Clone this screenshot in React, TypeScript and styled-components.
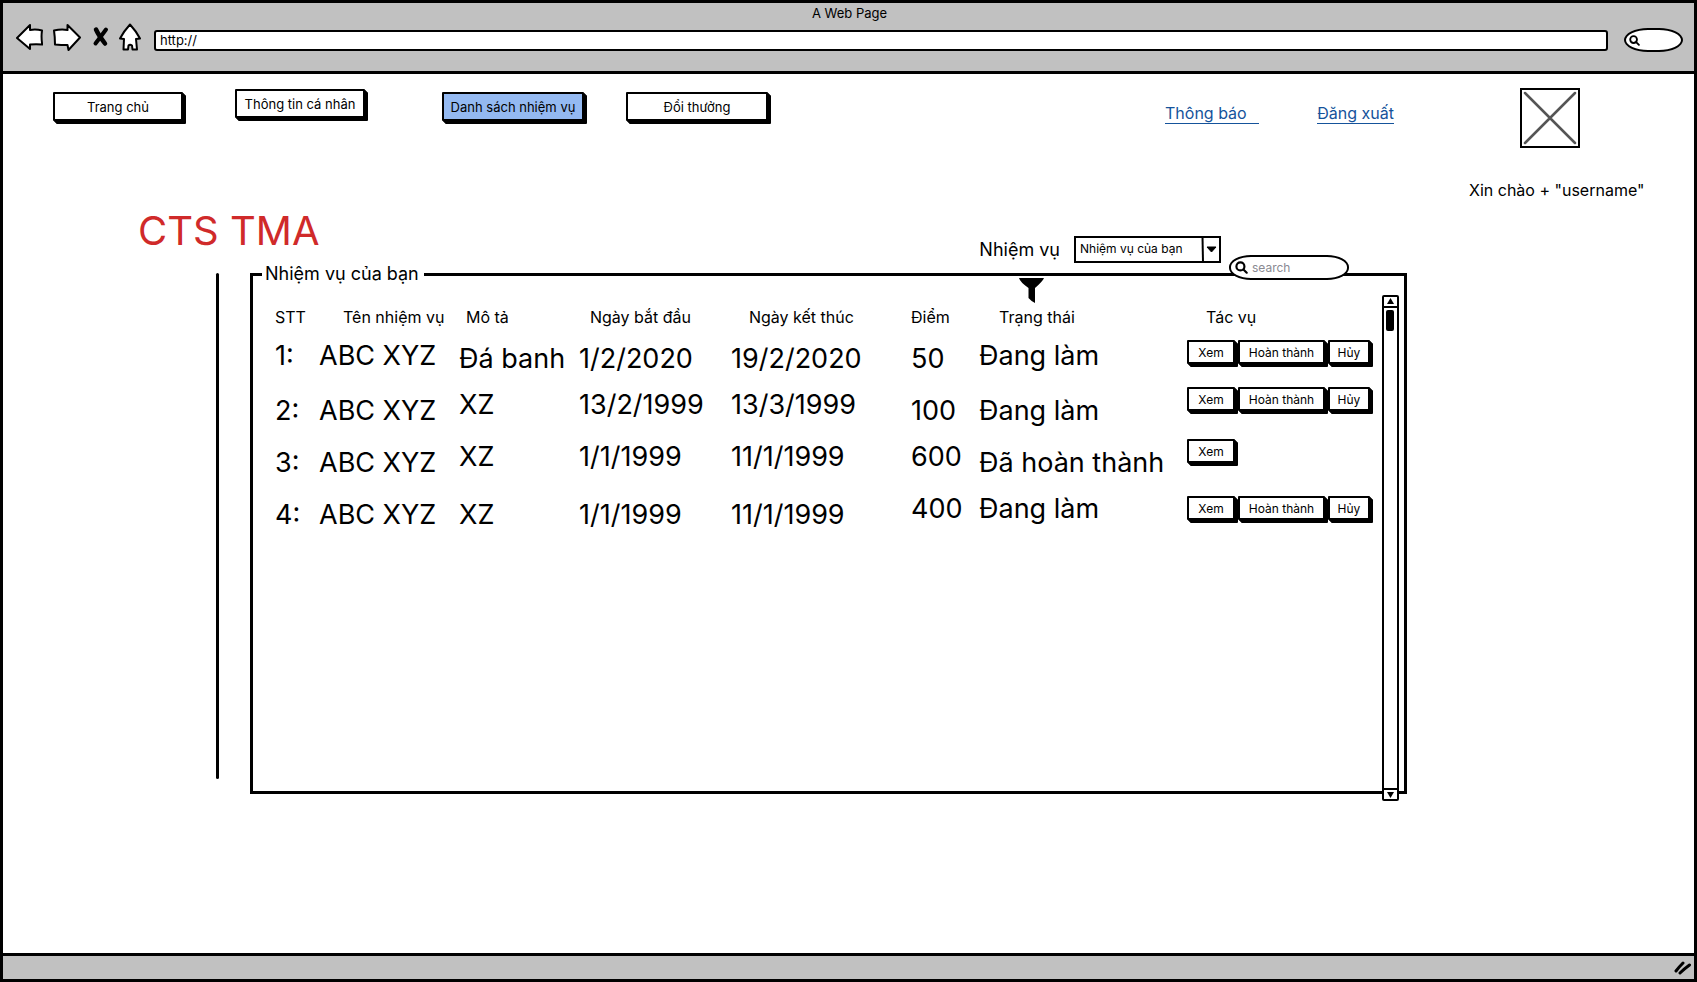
import React from 'react';
import styled, { createGlobalStyle } from 'styled-components';

const ink = '#000';
const chrome = '#c1c1c1';

const GlobalStyle = createGlobalStyle`
  *, *::before, *::after { box-sizing: border-box; }
  body { margin: 0; background: #fff; }
  body, button, input, select { font-family: Inter, "Noto Sans", sans-serif; color: ${ink}; }
`;

const Window = styled.div`
  display: flex;
  flex-direction: column;
  min-height: 100vh;
  border: 3px solid ${ink};
  background: #fff;
`;

const TopBar = styled.header`
  background: ${chrome};
  border-bottom: 3px solid ${ink};
  padding: 1px 11px 19px 13px;
`;

const WindowTitle = styled.div`
  text-align: center;
  font-size: 13px;
  line-height: 18px;
`;

const Toolbar = styled.div`
  display: flex;
  align-items: center;
  gap: 10px;
  height: 30px;
`;

const IconButton = styled.button`
  display: flex;
  border: 0;
  padding: 0;
  background: none;
`;

const AddressInput = styled.input`
  flex: 1;
  min-width: 0;
  height: 21px;
  margin: 6px 6px 0 3px;
  padding: 0 4px;
  border: 2px solid ${ink};
  border-radius: 3px;
  background: #fff;
  font-size: 13px;
`;

const BrowserSearch = styled.label`
  display: flex;
  align-items: center;
  width: 59px;
  height: 24px;
  margin-top: 6px;
  padding-left: 3px;
  border: 2px solid ${ink};
  border-radius: 24px / 12px;
  background: #fff;
`;

const BareInput = styled.input`
  flex: 1;
  min-width: 0;
  border: 0;
  padding: 0;
  background: none;
  outline: none;
  font-size: 12px;
  &::placeholder { color: #8a8a92; opacity: 1; }
`;

const Page = styled.div`
  flex: 1;
  display: flex;
  flex-direction: column;
`;

const SiteHeader = styled.div`
  display: flex;
  align-items: flex-start;
  padding: 14px 48px 0 50px;
`;

const Nav = styled.nav`
  display: grid;
  grid-template-columns: 182px 207px 184px auto;
  align-items: end;
  height: 32px;
  margin-top: 1px;
`;

const Button = styled.button<{ $width: number; $height?: number; $active?: boolean; $raised?: boolean }>`
  width: ${(p) => p.$width}px;
  height: ${(p) => p.$height ?? 29}px;
  align-self: ${(p) => (p.$raised ? 'start' : 'auto')};
  padding: 0;
  border: 2px solid ${ink};
  border-radius: 1px;
  box-shadow: 1px 1px 0 ${ink}, 2px 2px 0 ${ink}, 3px 3px 0 ${ink};
  background: ${(p) => (p.$active ? '#94b9f1' : '#fff')};
  font-size: ${(p) => (p.$height ? 12 : 13)}px;
  white-space: nowrap;
`;

const Links = styled.div`
  display: flex;
  justify-content: space-between;
  width: 229px;
  margin: 16px 75px 0 auto;
`;

const TextLink = styled.a<{ $trail?: boolean }>`
  padding-right: ${(p) => (p.$trail ? 12 : 0)}px;
  border-bottom: 1px solid #15539b;
  color: #15539b;
  font-size: 16px;
  line-height: 19px;
  text-decoration: none;
`;

const User = styled.div`
  width: 177px;
  font-size: 16px;
  line-height: 20px;
  white-space: nowrap;
`;

const Avatar = styled.svg`
  display: block;
  margin: 0 0 32px 51px;
`;

const TitleRow = styled.div`
  display: flex;
  justify-content: space-between;
  height: 54px;
  margin-top: 9px;
  padding: 0 473px 0 135px;
`;

const Title = styled.h1`
  margin: 0;
  color: #d02a2a;
  font-size: 40px;
  font-weight: 400;
  line-height: 43px;
`;

const Filter = styled.label`
  display: flex;
  align-items: center;
  align-self: flex-end;
  gap: 14px;
  font-size: 18px;
  line-height: 27px;
`;

const SelectBox = styled.span`
  position: relative;
  display: flex;
  width: 147px;
  height: 27px;
`;

const Select = styled.select`
  width: 100%;
  appearance: none;
  padding: 0 24px 2px 4px;
  border: 2px solid ${ink};
  border-radius: 0;
  background: #fff;
  font-size: 12px;
`;

const SelectArrow = styled.svg`
  position: absolute;
  top: 0;
  right: 0;
  pointer-events: none;
`;

const Main = styled.main`
  flex: 1;
  display: flex;
  padding: 0 287px 159px 213px;
`;

const Rule = styled.div`
  width: 3px;
  margin: 10px 31px 15px 0;
  border-radius: 2px;
  background: ${ink};
`;

const Panel = styled.div`
  position: relative;
  flex: 1;
  min-width: 0;
  display: flex;
`;

const Group = styled.fieldset`
  flex: 1;
  min-width: 0;
  margin: 0;
  padding: 19px 30px 0 22px;
  border: 3px solid ${ink};
`;

const Legend = styled.legend`
  margin-left: -13px;
  padding: 0 5px 0 3px;
  font-size: 18px;
  line-height: 22px;
`;

const SearchBox = styled.label`
  position: absolute;
  top: -8px;
  right: 58px;
  display: flex;
  align-items: center;
  gap: 4px;
  width: 120px;
  height: 25px;
  padding: 0 16px 0 4px;
  border: 2px solid ${ink};
  border-radius: 22px / 12px;
  background: #fff;
`;

const Table = styled.table`
  width: 100%;
  table-layout: fixed;
  border-collapse: collapse;
`;

const Heading = styled.th<{ $width?: number; $indent: number }>`
  width: ${(p) => (p.$width ? `${p.$width}px` : 'auto')};
  padding: 0 0 0 ${(p) => p.$indent}px;
  font-size: 16px;
  font-weight: 400;
  line-height: 26px;
  text-align: left;
  white-space: nowrap;
`;

const Filterable = styled.span`
  position: relative;
`;

const Funnel = styled.svg`
  position: absolute;
  bottom: 24px;
  left: 20px;
`;

type Align = 'top' | 'middle' | 'bottom';

const Row = styled.tr`
  height: 52px;
`;

const Cell = styled.td<{ $align: Align }>`
  padding: 0;
  vertical-align: ${(p) => p.$align};
  font-size: 27px;
  line-height: 46px;
  white-space: nowrap;
`;

const Actions = styled.div<{ $tight?: boolean }>`
  display: flex;
  align-items: center;
  gap: 3px;
  height: ${(p) => (p.$tight ? 34 : 44)}px;
`;

const Scrollbar = styled.div`
  position: absolute;
  top: 32px;
  bottom: -7px;
  right: 8px;
  width: 17px;
  display: flex;
  flex-direction: column;
  border: 2px solid ${ink};
  border-radius: 2px;
  background: #fff;
`;

const Track = styled.div`
  flex: 1;
  padding: 2px;
  border: solid ${ink};
  border-width: 2px 0;
`;

const Thumb = styled.div`
  width: 8px;
  height: 21px;
  border-radius: 2px;
  background: ${ink};
`;

const StatusBar = styled.footer`
  display: flex;
  justify-content: flex-end;
  align-items: center;
  height: 26px;
  padding-right: 2px;
  border-top: 3px solid ${ink};
  background: ${chrome};
`;

const Magnifier = ({ size }: { size: number }) => (
  <svg width={size} height={size} viewBox="0 0 12 12" fill="none" stroke={ink} strokeWidth="2" strokeLinecap="round" aria-hidden="true">
    <circle cx="5" cy="5" r="3.7" />
    <path d="M7.8 7.8 L10.8 10.8" />
  </svg>
);

const outline = { fill: '#fff', stroke: ink, strokeWidth: 2, strokeLinejoin: 'round' as const };

const columns = [
  { label: 'STT', width: 44, indent: 0 },
  { label: 'Tên nhiệm vụ', width: 140, indent: 24 },
  { label: 'Mô tả', width: 120, indent: 7 },
  { label: 'Ngày bắt đầu', width: 152, indent: 11 },
  { label: 'Ngày kết thúc', width: 180, indent: 18 },
  { label: 'Điểm', width: 68, indent: 0 },
  { label: 'Trạng thái', width: 208, indent: 20 },
  { label: 'Tác vụ', indent: 19 },
];

interface Task {
  cells: [string, Align][];
  tight?: boolean;
  done?: boolean;
}

const tasks: Task[] = [
  {
    cells: [['1:', 'middle'], ['ABC XYZ', 'middle'], ['Đá banh', 'bottom'], ['1/2/2020', 'bottom'], ['19/2/2020', 'bottom'], ['50', 'bottom'], ['Đang làm', 'middle']],
  },
  {
    cells: [['2:', 'bottom'], ['ABC XYZ', 'bottom'], ['XZ', 'top'], ['13/2/1999', 'top'], ['13/3/1999', 'top'], ['100', 'bottom'], ['Đang làm', 'bottom']],
    tight: true,
  },
  {
    cells: [['3:', 'bottom'], ['ABC XYZ', 'bottom'], ['XZ', 'top'], ['1/1/1999', 'top'], ['11/1/1999', 'top'], ['600', 'top'], ['Đã hoàn thành', 'bottom']],
    tight: true,
    done: true,
  },
  {
    cells: [['4:', 'bottom'], ['ABC XYZ', 'bottom'], ['XZ', 'bottom'], ['1/1/1999', 'bottom'], ['11/1/1999', 'bottom'], ['400', 'top'], ['Đang làm', 'top']],
  },
];

export default function App() {
  return (
    <Window>
      <GlobalStyle />
      <TopBar>
        <WindowTitle>A Web Page</WindowTitle>
        <Toolbar>
          <IconButton aria-label="Back">
            <svg width="27" height="28" viewBox="0 0 27 28">
              <path d="M1 15 L14 2 L14 7 Q20 6 26 7.5 Q25 14 26.200 21.500 Q20 21 14 21.500 L14 26 Z" {...outline} />
            </svg>
          </IconButton>
          <IconButton aria-label="Forward">
            <svg width="28" height="28" viewBox="0 0 28 28">
              <path d="M1 7.500 Q8 6 14.500 7 L14.500 2 L27 14.500 L15.500 27 L14.500 22 Q8 22 2 21.500 Q2 14 1 7.500 Z" {...outline} />
            </svg>
          </IconButton>
          <IconButton aria-label="Stop">
            <svg width="18" height="28" viewBox="0 0 18 28" fill="none" stroke={ink} strokeLinecap="round">
              <path d="M5 6.500 Q7.500 12 14 20.500" strokeWidth="4.500" />
              <path d="M15 6.500 Q11 12 4.500 20.500" strokeWidth="4" />
            </svg>
          </IconButton>
          <IconButton aria-label="Home">
            <svg width="22" height="28" viewBox="0 0 22 28">
              <path d="M11 1.500 Q17 8 21 15.500 L17 16 L18 26.500 L13.500 26.500 L13 22.500 Q11 21 9.500 22.500 L9 26.500 L4.500 26.500 L5 16 L1 15.500 Q5 8 11 1.500 Z" {...outline} />
            </svg>
          </IconButton>
          <AddressInput aria-label="Address" defaultValue="http://" />
          <BrowserSearch>
            <Magnifier size={11} />
            <BareInput aria-label="Search the web" />
          </BrowserSearch>
        </Toolbar>
      </TopBar>

      <Page>
        <SiteHeader>
          <Nav>
            <Button $width={130}>Trang chủ</Button>
            <Button $width={130} $raised>Thông tin cá nhân</Button>
            <Button $width={142} $active>Danh sách nhiệm vụ</Button>
            <Button $width={142}>Đổi thưởng</Button>
          </Nav>
          <Links>
            <TextLink href="#thong-bao" $trail>Thông báo</TextLink>
            <TextLink href="#dang-xuat">Đăng xuất</TextLink>
          </Links>
          <User>
            <Avatar width="60" height="60" viewBox="0 0 60 60" fill="none" aria-hidden="true">
              <path d="M5 5 L55 55 M55 5 L5 55" stroke="#555" strokeWidth="2.500" strokeLinecap="round" />
              <rect x="1" y="1" width="58" height="58" stroke={ink} strokeWidth="2" />
            </Avatar>
            Xin chào + "username"
          </User>
        </SiteHeader>

        <TitleRow>
          <Title>CTS TMA</Title>
          <Filter>
            Nhiệm vụ
            <SelectBox>
              <Select>
                <option>Nhiệm vụ của bạn</option>
              </Select>
              <SelectArrow width="20" height="27" viewBox="0 0 20 27" aria-hidden="true">
                <path d="M1.500 1 L2 26" stroke={ink} strokeWidth="2" />
                <path d="M6 11 H15 L10.500 16 Z" fill={ink} stroke={ink} strokeLinejoin="round" />
              </SelectArrow>
            </SelectBox>
          </Filter>
        </TitleRow>

        <Main>
          <Rule />
          <Panel>
            <Group>
              <Legend>Nhiệm vụ của bạn</Legend>
              <Table>
                <thead>
                  <tr>
                    {columns.map((c) => (
                      <Heading key={c.label} $width={c.width} $indent={c.indent}>
                        {c.label === 'Trạng thái' ? (
                          <Filterable>
                            {c.label}
                            <Funnel width="25" height="25" viewBox="0 0 25 25" fill={ink} aria-hidden="true">
                              <path d="M0 0 H25 Q24 3 16 10 V25 Q12 23 9.500 20 V10 Q1 4 0 0 Z" />
                            </Funnel>
                          </Filterable>
                        ) : (
                          c.label
                        )}
                      </Heading>
                    ))}
                  </tr>
                </thead>
                <tbody>
                  {tasks.map((task) => (
                    <Row key={task.cells[0][0]}>
                      {task.cells.map(([text, align], i) => (
                        <Cell key={i} $align={align}>{text}</Cell>
                      ))}
                      <Cell $align="top">
                        <Actions $tight={task.tight}>
                          <Button $width={48} $height={24}>Xem</Button>
                          {!task.done && <Button $width={87} $height={24}>Hoàn thành</Button>}
                          {!task.done && <Button $width={42} $height={24}>Hủy</Button>}
                        </Actions>
                      </Cell>
                    </Row>
                  ))}
                </tbody>
              </Table>
            </Group>
            <SearchBox>
              <Magnifier size={13} />
              <BareInput placeholder="search" aria-label="search" />
            </SearchBox>
            <Scrollbar>
              <svg width="13" height="9" viewBox="0 0 13 9" aria-hidden="true">
                <path d="M6.500 1 L10 7 H3 Z" fill={ink} />
              </svg>
              <Track>
                <Thumb />
              </Track>
              <svg width="13" height="9" viewBox="0 0 13 9" aria-hidden="true">
                <path d="M6.500 8 L10 2 H3 Z" fill={ink} />
              </svg>
            </Scrollbar>
          </Panel>
        </Main>
      </Page>

      <StatusBar>
        <svg width="18" height="14" viewBox="0 0 18 14" fill="none" stroke={ink} strokeWidth="3" strokeLinecap="round" aria-hidden="true">
          <path d="M2 10 Q5 6 9 2 M6 12 Q10 8 15.500 4" />
        </svg>
      </StatusBar>
    </Window>
  );
}
